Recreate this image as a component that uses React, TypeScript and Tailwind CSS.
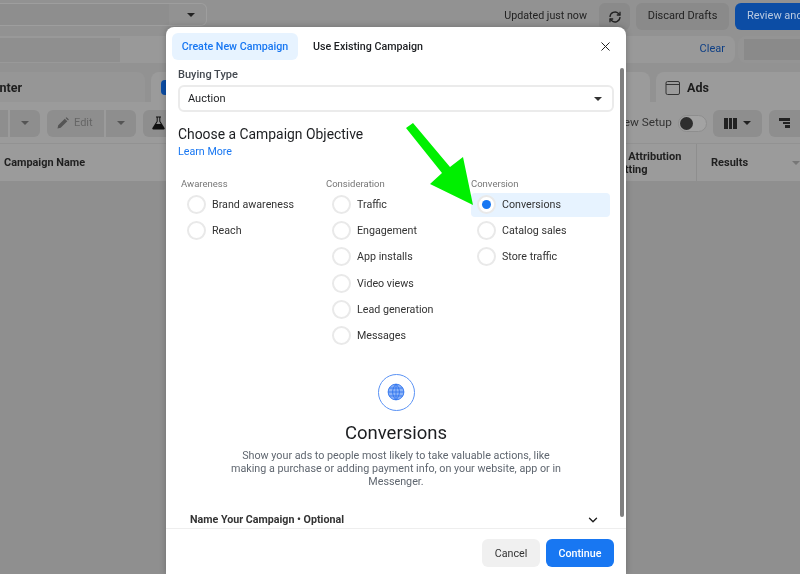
import { ChevronDown, X } from 'lucide-react'

const columns = [
  { title: 'Awareness', items: ['Brand awareness', 'Reach'] },
  { title: 'Consideration', items: ['Traffic', 'Engagement', 'App installs', 'Video views', 'Lead generation', 'Messages'] },
  { title: 'Conversion', items: ['Conversions', 'Catalog sales', 'Store traffic'] },
]

function Caret({ className = 'border-t-[#333]' }: { className?: string }) {
  return <span className={`block w-0 h-0 border-x-[4px] border-x-transparent border-t-[4px] ${className}`} />
}

function Radio({ checked }: { checked?: boolean }) {
  return (
    <span className="w-[19px] h-[19px] rounded-full bg-white border-2 border-[#e9e9e9] flex items-center justify-center shrink-0">
      {checked && <span className="w-[9px] h-[9px] rounded-full bg-[#1877f2]" />}
    </span>
  )
}

function Background() {
  return (
    <div className="w-[800px] h-[574px] bg-[#8f8f8f] flex flex-col overflow-hidden text-[11px] text-[#1d1d1d]">
      {/* top bar */}
      <div className="h-[33px] shrink-0 flex items-center bg-[#929292]">
        <div className="w-[207px] h-[23px] self-start mt-[3px] rounded-r-md border border-l-0 border-[#9e9e9e] flex">
          <div className="flex-1 bg-[#8e8e8e]" />
          <div className="w-[37px] pl-[6px] flex items-center justify-center"><Caret className="border-t-[#222]" /></div>
        </div>
        <span className="ml-auto text-[#222] text-[10.7px]">Updated just now</span>
        <div className="ml-[12px] w-[31px] h-[27px] rounded-md bg-[#8a8a8a] flex items-center justify-center">
          <svg width="14" height="14" viewBox="0 0 14 14" fill="none" stroke="#222" strokeWidth="1.3">
            <path d="M2 7a5 5 0 0 1 8.5-3.5L12 5M12 7a5 5 0 0 1-8.5 3.5L2 9" />
            <path d="M12 1.8V5H8.8M2 12.2V9h3.2" />
          </svg>
        </div>
        <div className="ml-[6px] w-[93px] h-[27px] rounded-md bg-[#8a8a8a] flex items-center justify-center text-[#222]">Discard Drafts</div>
        <div className="ml-[6px] w-[65px] h-[27px] rounded-l-md bg-[#0c4da5] text-[#b9c9e0] pl-[12px] flex items-center whitespace-nowrap overflow-hidden">Review and</div>
      </div>
      {/* filter row */}
      <div className="h-[33px] shrink-0 flex items-start pt-[3px] gap-[3px] bg-[#929292]">
        <div className="w-[735px] h-[27px] rounded-r-lg bg-[#999999] flex items-center pr-[10px]">
          <div className="w-[120px] h-[24px] bg-[#8f8f8f]" />
          <span className="ml-auto text-[#0e3f85] text-[11px]">Clear</span>
        </div>
        <div className="flex-1 h-[27px] rounded-l-lg bg-[#949494] pl-[6px] py-[3px]">
          <div className="h-full bg-[#8a8a8a]" />
        </div>
      </div>
      {/* tabs */}
      <div className="h-[36px] shrink-0 flex items-end gap-[6px] text-[12.5px] font-bold bg-[#929292]">
        <div className="w-[145px] h-[30px] pt-[2px] rounded-tr-lg bg-[#969696] flex items-center justify-end pr-[123px]">nter</div>
        <div className="w-[499px] h-[30px] rounded-t-lg bg-[#9b9b9b] pl-[10px] flex items-center">
          <span className="w-[6px] h-[15px] rounded-l-sm bg-[#0c4da5]" />
        </div>
        <div className="flex-1 h-[30px] pt-[2px] rounded-tl-lg bg-[#9b9b9b] flex items-center pl-[9px] gap-[6px]">
          <svg width="16" height="16" viewBox="0 0 16 16" fill="none" stroke="#333" strokeWidth="1">
            <rect x="1" y="1.5" width="13.5" height="13" rx="1.5" />
            <path d="M1 4.5h13.5" />
          </svg>
          Ads
        </div>
      </div>
      {/* toolbar */}
      <div className="h-[42px] shrink-0 bg-[#9b9b9b] border-b border-[#929292] pt-[1px] flex items-center">
        <div className="w-[8px] h-[27px] bg-[#8e8e8e]" />
        <div className="ml-[2px] w-[30px] h-[27px] rounded-r-md bg-[#8e8e8e] flex items-center justify-center"><Caret className="border-t-[#555]" /></div>
        <div className="ml-[7px] w-[57px] h-[27px] rounded-l-md bg-[#8e8e8e] flex items-center gap-[5px] pl-[10px] text-[#666]">
          <svg width="12" height="12" viewBox="0 0 12 12" fill="#555"><path d="M0.5 11.5 1.2 8.3 7.8 1.7 10.3 4.2 3.7 10.8zM8.6 0.9 9.6 0.2 11.8 2.4 11.1 3.4z" /></svg>
          Edit
        </div>
        <div className="ml-[2px] w-[30px] h-[27px] rounded-r-md bg-[#8e8e8e] flex items-center justify-center"><Caret className="border-t-[#555]" /></div>
        <div className="ml-[7px] w-[30px] h-[27px] rounded-l-md bg-[#8e8e8e] pl-[9px] flex items-center">
          <svg width="13" height="14" viewBox="0 0 13 14" fill="#111"><path d="M4 0.5h5v1H8.3v3.7L12.6 12a1 1 0 0 1-.9 1.5H1.3A1 1 0 0 1 .4 12L4.7 5.2V1.5H4zM5.7 1.5v4L4.2 8h4.6L7.3 5.5v-4z" /></svg>
        </div>
        <span className="ml-auto mr-[6px] text-[#333] text-[11.8px] whitespace-nowrap">View Setup</span>
        <div className="w-[29px] h-[17px] rounded-full bg-[#a3a3a3] border border-[#8e8e8e] p-[1px] mr-[6px]">
          <div className="w-[13px] h-[13px] rounded-full bg-[#2e2e2e]" />
        </div>
        <div className="w-[49px] h-[27px] rounded-md bg-[#8e8e8e] flex items-center justify-center gap-[6px] mr-[7px]">
          <span className="flex gap-[1px]">
            <span className="w-[3.5px] h-[11px] bg-[#222]" />
            <span className="w-[3.5px] h-[11px] bg-[#222]" />
            <span className="w-[3.5px] h-[11px] bg-[#222]" />
          </span>
          <Caret className="border-t-[#222]" />
        </div>
        <div className="w-[31px] h-[27px] rounded-l-md bg-[#8e8e8e] pl-[10px] flex flex-col justify-center gap-[1px]">
          <span className="w-[11px] h-[2.5px] bg-[#222]" />
          <span className="w-[7px] h-[2.5px] bg-[#222] ml-[4px]" />
          <span className="w-[5px] h-[2.5px] bg-[#222] ml-[6px]" />
        </div>
      </div>
      {/* table header */}
      <div className="h-[37px] shrink-0 bg-[#9b9b9b] flex items-center font-bold text-[11px] text-[#1f1f1f]">
        <span className="pl-[4px] pt-[2px] w-[612px] text-[10.9px]">Campaign Name</span>
        <span className="w-[85px] h-full flex items-center leading-[13px] border-r border-[#8e8e8e]">Ad Attribution<br />Setting</span>
        <span className="pl-[14px] pt-[2px]">Results</span>
        <span className="ml-auto"><Caret className="border-t-[#777]" /></span>
      </div>
    </div>
  )
}

function Modal() {
  return (
    <div className="absolute left-[166px] top-[27px] w-[460px] h-[547px] bg-white rounded-t-lg flex flex-col overflow-hidden text-[#1c1e21] shadow-[0_0_6px_rgba(0,0,0,0.25)]">
      {/* header tabs */}
      <div className="h-[33px] shrink-0 flex items-end pl-[6px] text-[10.7px] font-medium">
        <div className="w-[126px] h-[27px] pt-[1px] rounded-md bg-[#e7f3ff] text-[#1877f2] flex items-center justify-center">Create New Campaign</div>
        <div className="ml-[15px] h-[27px] pt-[1px] flex items-center">Use Existing Campaign</div>
        <X className="ml-auto mr-[13px] mb-[6px] text-[#222]" size={15} strokeWidth={1.6} />
      </div>

      <div className="flex-1 min-h-0 overflow-hidden pl-[12px] pr-[12px] pt-[7px]">
        <div className="text-[11px] font-medium text-[#444950] leading-[14px] mt-[1px]">Buying Type</div>
        <div className="mt-[3px] h-[27px] rounded-md border-2 border-[#ebebeb] flex items-center pl-[8px] pr-[10px] text-[11px]">
          <span className="pt-[2px]">Auction</span>
          <Caret className="ml-auto border-t-[#333]" />
        </div>
        <div className="mt-[13px] text-[13.9px] leading-[18px]">Choose a Campaign Objective</div>
        <div className="mt-[2px] text-[10.7px] leading-[14px] text-[#1877f2]">Learn More</div>

        <div className="mt-[19px] grid grid-cols-[145px_145px_139px] pl-[3px]">
          {columns.map(col => (
            <div key={col.title}>
              <div className="text-[9.5px] text-[#777] leading-[12px] h-[14.5px]">{col.title}</div>
              {col.items.map(item => {
                const active = item === 'Conversions'
                return (
                  <div
                    key={item}
                    className={`h-[24px] mb-[2.2px] flex items-center gap-[6px] pl-[6px] rounded-sm text-[10.7px] text-[#333] ${active ? 'bg-[#e7f3ff]' : ''}`}
                  >
                    <Radio checked={active} />
                    <span className="pt-[1px]">{item}</span>
                  </div>
                )
              })}
            </div>
          ))}
        </div>

        <div className="mt-[24px] flex flex-col items-center">
          <div className="w-[37px] h-[37px] rounded-full border-[1.5px] border-[#5b93f5] flex items-center justify-center">
            <svg width="18" height="18" viewBox="0 0 16 16" fill="#8db4f8" stroke="#2f74ee" strokeWidth="0.8">
              <circle cx="8" cy="8" r="7" />
              <path fill="none" d="M1 8h14M2 4.5h12M2 11.5h12M8 1v14M8 1c-4 4-4 10 0 14M8 1c4 4 4 10 0 14" />
            </svg>
          </div>
          <div className="mt-[11px] text-[18.5px] leading-[22px] text-[#1c1e21]">Conversions</div>
          <p className="mt-[5.5px] w-[340px] text-center text-[10.75px] leading-[13px] text-[#606770]">
            Show your ads to people most likely to take valuable actions, like making a purchase or adding payment info, on your website, app or in Messenger.
          </p>
        </div>

        <div className="mt-[24px] flex items-center pl-[12px] pr-[14px] text-[10.7px] font-bold text-[#333] leading-[14px]">
          <span className="pt-[1px]">Name Your Campaign • Optional</span>
          <ChevronDown className="ml-auto text-[#222]" size={14} strokeWidth={2.4} />
        </div>
      </div>

      <div className="h-[46px] shrink-0 border-t border-[#eeeeee] flex items-start justify-end gap-[6px] pt-[10px] pr-[12px] text-[10.7px]">
        <div className="w-[58px] h-[28px] pt-[2px] rounded-md bg-[#f0f0f0] text-[#333] flex items-center justify-center">Cancel</div>
        <div className="w-[68px] h-[28px] pt-[2px] rounded-md bg-[#1877f2] text-white font-medium flex items-center justify-center">Continue</div>
      </div>

      {/* scrollbar */}
      <div className="absolute right-[2px] top-[41px] w-[4px] h-[449px] rounded-full bg-[#7f7f7f]" />
    </div>
  )
}

export default function App() {
  return (
    <div className="relative w-[800px] h-[574px] overflow-hidden blur-[0.35px] font-['Roboto',sans-serif]">
      <Background />
      <Modal />
      <svg className="absolute left-0 top-0 pointer-events-none" width="800" height="574">
        <polygon fill="#00f000" points="406,128 413,123 450,167 463,157 473,205 430,184 442,173" />
      </svg>
    </div>
  )
}
